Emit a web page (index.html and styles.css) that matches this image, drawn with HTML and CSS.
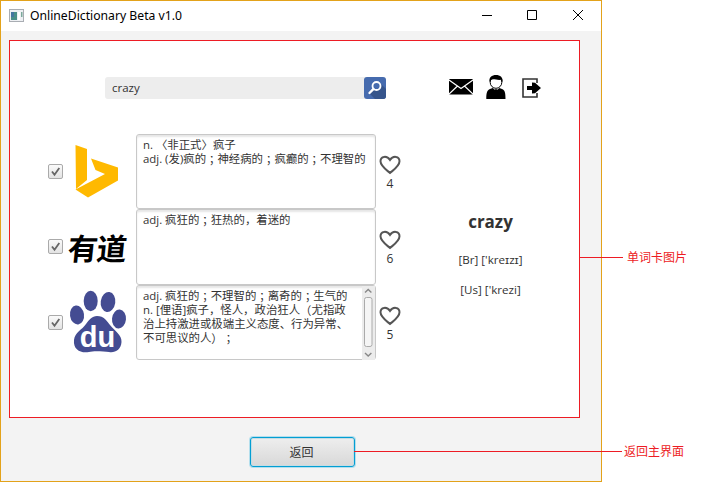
FILE: index.html
```html
<!DOCTYPE html>
<html lang="en">
<head>
<meta charset="utf-8">
<title>OnlineDictionary Beta v1.0</title>
<link rel="stylesheet" href="styles.css">
</head>
<body>
<main class="window">
  <header class="titlebar">
    <svg class="app-icon" width="15" height="13" viewBox="0 0 15 13"><rect x=".5" y=".5" width="14" height="12" fill="#eef0f3" stroke="#a9adb3"/><rect x="2" y="3" width="6" height="8" fill="#4a8f88"/><rect x="2" y="3" width="3" height="5" fill="#4476a0"/><rect x="9" y="3" width="2" height="8" fill="#fff"/><rect x="12" y="3" width="1.5" height="5" fill="#7ba99b"/></svg>
    <h1 class="title">OnlineDictionary Beta v1.0</h1>
    <svg class="controls" width="103" height="12" viewBox="0 0 103 12" fill="none" stroke="#000"><path d="M0 6.500h10M45.500 1.500h9v9h-9z"/><path d="M91 1l10 10M101 1L91 11"/></svg>
  </header>
  <section class="card">
    <div class="toolbar">
      <div class="search"><span class="query">crazy</span>
        <svg width="22" height="22" viewBox="0 0 22 22"><rect width="22" height="22" rx="3" fill="#466bae"/><path d="M5 16L16 6l6 6v7q0 3-3 3h-8z" fill="#36558c"/><circle cx="12.500" cy="9" r="4" fill="#466bae" stroke="#fff" stroke-width="1.800"/><path d="M9.300 12.200L5.500 16" stroke="#fff" stroke-width="2.400" stroke-linecap="round"/></svg>
      </div>
      <div class="actions">
        <svg class="mail" width="24" height="16" viewBox="0 0 24 16"><rect width="24" height="15.500" rx="1" fill="#000"/><path d="M0 1l12 8.500L24 1M0 15l8.500-8M24 15l-8.500-8" fill="none" stroke="#fff" stroke-width="1.200"/></svg>
        <svg class="user" width="20" height="24" viewBox="0 0 20 24"><path d="M.3 24c0-6 .7-9 3.700-10l4-1.500h4l4 1.500c3 1 3.500 4 3.500 10z"/><path d="M6.500 12.800L10 16l3.700-3.200-1-2H7.500z" fill="#fff"/><ellipse cx="10" cy="7.300" rx="5.800" ry="6" fill="#fff" stroke="#000"/><path d="M3.500 7C2.500 2.500 6 0 10 0s7.500 2.500 6.500 7.300l-1.300-2.500C11 5.500 7 3.300 5 5z"/><path d="M8 15l2-1 2 1-1 1H9z"/></svg>
        <svg class="exit" width="19" height="20" viewBox="0 0 19 20"><path d="M15 5V1H1v18h14v-4" fill="none" stroke="#333" stroke-width="1.600"/><path d="M5 8h5V4.500l3 .3 6 5.200-6 5.200-3 .3V12H5z"/></svg>
      </div>
    </div>
    <div class="content">
      <div class="results">
        <article class="row">
          <span class="check"><svg width="11" height="11" viewBox="0 0 11 11"><path d="M2 5.500l2.500 3.300L9.300 2"/></svg></span>
          <span class="logo"><svg width="60" height="62" viewBox="0 0 60 62"><path d="M7.500 5L19 9v31L8 49zM23 18.500l27 9v13L20 57.500 7.500 49.500 37 34l-9.500-4z" fill="#ffb900"/></svg></span>
          <div class="definition"><p>n. 〈非正式〉疯子</p><p>adj. (发)疯的<b>；</b>神经病的<b>；</b>疯癫的<b>；</b>不理智的</p></div>
          <div class="likes"><svg width="22" height="20" viewBox="0 0 22 20"><path d="M11 18C7 14.500 1.500 11 1.500 6.300 1.500 1 8 .3 11 5c3-4.700 9.500-4 9.500 1.300C20.500 11 15 14.500 11 18z"/></svg><span>4</span></div>
        </article>
        <article class="row">
          <span class="check"><svg width="11" height="11" viewBox="0 0 11 11"><path d="M2 5.500l2.500 3.300L9.300 2"/></svg></span>
          <span class="logo youdao">有道</span>
          <div class="definition"><p>adj. 疯狂的<b>；</b>狂热的，着迷的</p></div>
          <div class="likes"><svg width="22" height="20" viewBox="0 0 22 20"><path d="M11 18C7 14.500 1.500 11 1.500 6.300 1.500 1 8 .3 11 5c3-4.700 9.500-4 9.500 1.300C20.500 11 15 14.500 11 18z"/></svg><span>6</span></div>
        </article>
        <article class="row">
          <span class="check"><svg width="11" height="11" viewBox="0 0 11 11"><path d="M2 5.500l2.500 3.300L9.300 2"/></svg></span>
          <span class="logo"><svg width="60" height="64" viewBox="0 0 60 64"><g fill="#444c92"><ellipse cx="22.700" cy="11" rx="7" ry="10.200"/><ellipse cx="40" cy="12" rx="7.300" ry="10" transform="rotate(8 40 12)"/><ellipse cx="9" cy="25" rx="7" ry="9.500" transform="rotate(-8 9 25)"/><ellipse cx="51" cy="29" rx="7" ry="9.500" transform="rotate(5 51 29)"/><path d="M29 26c7 0 10 5 13 9 5 6 12 10 11.500 17C53 60 47 63 41 62c-5-.5-15-1.500-20 0C13 63.500 5 60 6 50c1-8 8-10 12-16 3-4 6-8 11-8z"/></g><text x="29.500" y="57" class="du" text-anchor="middle">du</text></svg></span>
          <div class="definition scrolling"><p>adj. 疯狂的<b>；</b>不理智的<b>；</b>离奇的<b>；</b>生气的</p><p>n. [俚语]疯子，怪人，政治狂人<b>（</b>尤指政</p><p>治上持激进或极端主义态度、行为异常、</p><p>不可思议的人<b>）</b><b>；</b></p>
            <svg class="scrollbar" width="13" height="74" viewBox="0 0 13 74"><path d="M0 0h13v74H0z" fill="#ececec"/><rect x="2.500" y="11.500" width="7.500" height="49" rx="2" fill="#f5f5f5" stroke="#aaa"/><path d="M3 6.500l3.200-3 3.200 3M3 67l3.200 3 3.200-3" fill="none" stroke="#888" stroke-width="1.400"/></svg>
          </div>
          <div class="likes"><svg width="22" height="20" viewBox="0 0 22 20"><path d="M11 18C7 14.500 1.500 11 1.500 6.300 1.500 1 8 .3 11 5c3-4.700 9.500-4 9.500 1.300C20.500 11 15 14.500 11 18z"/></svg><span>5</span></div>
        </article>
      </div>
      <aside class="word"><h2>crazy</h2><p>[Br] ['kreɪzɪ]</p><p>[Us] ['krezi]</p></aside>
    </div>
  </section>
  <button class="back">返回</button>
</main>
<div class="callout callout-card"><i></i><span>单词卡图片</span></div>
<div class="callout callout-back"><i></i><span>返回主界面</span></div>
</body>
</html>
```
FILE: styles.css
```css
* { box-sizing: border-box; }
body { margin: 0; width: 712px; height: 482px; overflow: hidden; background: #fff; position: relative; font-family: "Open Sans", "Noto Sans CJK SC", sans-serif; color: #333; }
h1, h2, p { margin: 0; }
svg { display: block; flex: none; }
.window { width: 602px; height: 482px; border: 1px solid #e3a21a; background: #f3f3f3; display: flex; flex-direction: column; }
.titlebar { height: 30px; flex: none; background: #fff; display: flex; align-items: center; padding: 0 16px 0 8px; }
.app-icon { margin-top: -2px; }
.title { font: 12.2px/16px "Noto Sans", sans-serif; color: #000; margin-left: 6px; flex: 1; }
.controls { margin-top: -2px; }
.card { width: 571px; height: 378px; flex: none; margin: 9px 0 0 8px; border: 1px solid #ed1c24; background: #fff; }
.toolbar { height: 92.5px; padding: 34px 38px 0 95px; display: flex; justify-content: space-between; }
.search { width: 281px; height: 22px; margin-top: 2px; border-radius: 3px; background: #ededed; display: flex; justify-content: space-between; font-size: 11.5px; line-height: 22px; }
.query { padding-left: 7px; }
.actions { width: 92px; height: 24px; display: flex; align-items: center; }
.actions .user { margin-left: 13px; }
.actions .exit { margin: 1px 0 0 16px; }
.content { display: flex; }
.results { width: 392px; padding-left: 38px; }
.row { height: 75.5px; display: flex; align-items: center; }
.check { width: 15px; height: 15px; border: 1px solid #aaa; border-radius: 2px; background: linear-gradient(#fafafa, #e3e3e3); padding: 1px; }
.check path { fill: none; stroke: #666; stroke-width: 1.8; }
.logo { width: 60px; margin: 0 8px 0 5px; flex: none; }
.youdao { font: 700 30px/40px "Noto Sans CJK SC", sans-serif; color: #000; letter-spacing: -1px; transform: skewX(-6deg); white-space: nowrap; }
.du { font: bold 29px "Liberation Sans", sans-serif; fill: #fff; }
.definition { width: 240px; height: 75.5px; flex: none; border: 1px solid #c8c8c8; border-radius: 3px; box-shadow: inset 0 2px 2px #e6e6e6; padding: 3px 0 0 6px; font-size: 11.4px; line-height: 14px; white-space: nowrap; position: relative; }
.definition p { height: 14px; }
.definition b { display: inline-block; height: 14px; vertical-align: top; font-family: "Noto Sans CJK TC", sans-serif; font-weight: 400; }
.scrollbar { position: absolute; right: 0; top: 0; }
.likes { width: 28px; flex: none; display: flex; flex-direction: column; align-items: center; font-size: 12px; line-height: 16px; margin-top: 4px; }
.likes path { fill: none; stroke: #555; stroke-width: 2; }
.likes span { margin-top: 1px; }
.word { width: 179px; padding-top: 76px; text-align: center; font-size: 11.6px; line-height: 16px; }
.word h2 { font-size: 17px; line-height: 24px; }
.word p { margin-top: 18px; }
.word p + p { margin-top: 14px; }
.back { width: 105px; height: 30px; margin: 19px 0 0 249px; border: 1px solid #039ed3; border-radius: 3px; background: linear-gradient(#eee, #d8d8d8); box-shadow: 0 0 0 1px #b4dfed, inset 0 0 0 1px #c6dce3; font: 12px "Noto Sans CJK SC", sans-serif; color: #333; padding: 0 2px 1px 0; flex: none; }
.callout { position: absolute; display: flex; align-items: center; height: 18px; font: 12px/18px "Noto Sans CJK SC", sans-serif; color: #ed1c24; white-space: nowrap; }
.callout i { height: 1px; background: #ed1c24; }
.callout-card { left: 580px; top: 248px; }
.callout-card i { width: 43px; margin-right: 4px; }
.callout-back { left: 354px; top: 442px; }
.callout-back i { width: 268px; margin-right: 2px; }
```
